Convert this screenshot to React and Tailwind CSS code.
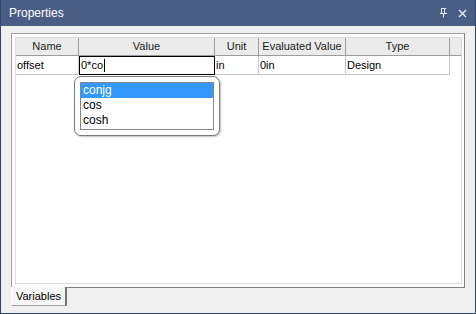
import React from 'react';

const cols = [
  { name: 'Name', w: 'w-[63px]' },
  { name: 'Value', w: 'w-[136px]' },
  { name: 'Unit', w: 'w-[44px]' },
  { name: 'Evaluated Value', w: 'w-[87px]' },
  { name: 'Type', w: 'w-[104px]' },
];

const App = () => {
  return (
    <div className="w-[476px] h-[314px] bg-[#33466a] p-px pt-0 flex flex-col" style={{ fontFamily: '"Liberation Sans", Arial, sans-serif' }}>
      {/* Title bar */}
      <div className="h-[26px] flex items-center justify-between pl-[8px] pr-[8px] bg-[#4a5e85] text-white">
        <span className="text-[12px]">Properties</span>
        <div className="flex items-center gap-[10px] text-[#e8ecf4]">
          <svg width="9" height="10" viewBox="0 0 9 10">
            <path d="M2 0.5h5M2.5 0.5v5M5.5 0.5v5M1 5.5h7M4.5 5.5v4" stroke="currentColor" fill="none" />
          </svg>
          <svg width="9" height="9" viewBox="0 0 9 9">
            <path d="M1 1l7 7M8 1l-7 7" stroke="currentColor" strokeWidth="1.4" />
          </svg>
        </div>
      </div>

      {/* Body */}
      <div className="flex-1 bg-[#f0f0f0] flex flex-col pt-[7px] px-[10px] pb-[7px]">
        <div className="flex-1 border border-[#a0a0a0] border-r-[#808080] border-b-[#808080] bg-white p-[3px] pr-[2px]">
          <div className="h-full border border-[#dcdcdc] relative">
            {/* Header */}
            <div className="flex h-[18px] text-[11px] text-[#1a1a1a]">
              {cols.map((c) => (
                <div key={c.name} className={`${c.w} shrink-0 bg-[#ebebeb] border-r border-b border-[#9c9c9c] flex items-center justify-center`}>
                  {c.name}
                </div>
              ))}
              <div className="flex-1 bg-[#ebebeb] border-b border-[#9c9c9c]" />
            </div>
            {/* Row */}
            <div className="flex h-[19px] text-[11px] text-black">
              <div className="w-[63px] shrink-0 border-r border-b border-[#c8c8c8] pl-[1px] flex items-center">offset</div>
              <div className="w-[136px] shrink-0 border border-black flex items-center pl-[1px] bg-white">
                0*co<span className="inline-block w-px h-[13px] bg-black ml-px" />
              </div>
              <div className="w-[44px] shrink-0 border-r border-b border-[#c8c8c8] pl-[1px] flex items-center">in</div>
              <div className="w-[87px] shrink-0 border-r border-b border-[#c8c8c8] pl-[1px] flex items-center">0in</div>
              <div className="w-[104px] shrink-0 border-r border-b border-[#c8c8c8] pl-[1px] flex items-center">Design</div>
            </div>

            {/* Autocomplete popup */}
            <div className="absolute left-[58px] top-[38px] w-[146px] h-[60px] bg-white border border-[#7a7a7a] rounded-[7px] p-[5px] shadow-[1px_1px_2px_rgba(0,0,0,0.25)]">
              <div className="h-full border border-[#828790] text-[12px] leading-[15px] text-black">
                <div className="bg-[#3399ff] text-white pl-[2px]">conjg</div>
                <div className="pl-[2px]">cos</div>
                <div className="pl-[2px]">cosh</div>
              </div>
            </div>
          </div>
        </div>

        {/* Tabs */}
        <div className="flex h-[18px]">
          <div className="w-[56px] bg-[#f7f7f7] border-l border-b border-r-2 border-[#ffffff] border-r-[#707070] border-b-[#a0a0a0] text-[11px] flex items-center justify-center -mt-px">
            Variables
          </div>
        </div>
      </div>
    </div>
  );
};

export default App;
